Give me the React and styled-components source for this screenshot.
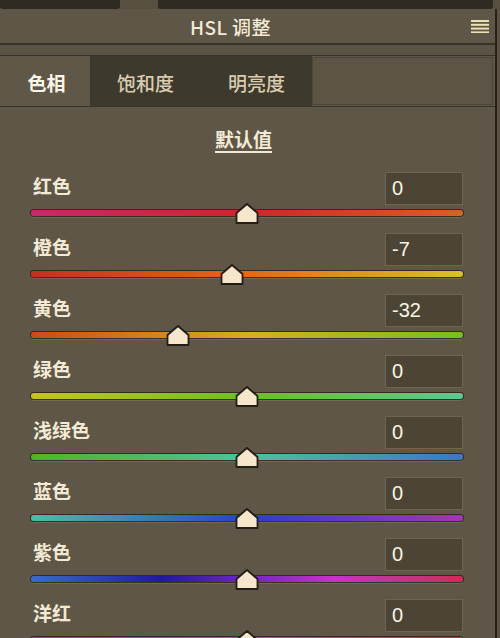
import React from 'react'
import styled, { createGlobalStyle } from 'styled-components'

const CREAM = '#f3ead6'
const PANEL = '#5e5646'
const DARK = '#3e392d'

const channels = [
  { name: '红色', value: 0, colors: ['#c42a6c', '#c8282a 50%', '#d8621c'] },
  { name: '橙色', value: -7, colors: ['#c43020', '#e06a1a 50%', '#d6c228'] },
  { name: '黄色', value: -32, colors: ['#cc4a18', '#d6b020 50%', '#76c020'] },
  { name: '绿色', value: 0, colors: ['#c6c41e', '#6cc020 50%', '#5cc894'] },
  { name: '浅绿色', value: 0, colors: ['#54b41e', '#50c0a0 50%', '#3c78c0'] },
  { name: '蓝色', value: 0, colors: ['#48c0a4', '#2a40c8 50%', '#a434b8'] },
  { name: '紫色', value: 0, colors: ['#3a6cc8', '#2018a8 30%', '#c038c0 70%', '#d02c58'] },
  { name: '洋红', value: 0, colors: ['#9c34c0', '#d040a0 50%', '#d02a3a'] },
]

function MenuIcon() {
  return (
    <svg width="18" height="14" viewBox="0 0 18 14">
      {[1, 4.8, 8.6, 12.4].map((y) => (
        <rect key={y} x="0" y={y} width="18" height="2" fill="#ebdfb4" />
      ))}
    </svg>
  )
}

function Thumb() {
  return (
    <svg width="24" height="21" viewBox="0 0 24 21">
      <path
        d="M12 1 L22.5 10 L22.5 20 L1.5 20 L1.5 10 Z"
        fill="#f6e6cc"
        stroke="#241d15"
        strokeWidth="1.8"
        strokeLinejoin="round"
      />
    </svg>
  )
}

function SliderRow({ name, value, colors }) {
  // -100..100 mapped onto the track
  const left = ((value + 100) / 200) * 100
  return (
    <Row>
      <TopLine>
        <Label>{name}</Label>
        <ValueBox>{value}</ValueBox>
      </TopLine>
      <TrackWrap>
        <Track $colors={colors} />
        <ThumbHolder style={{ left: `${left}%` }}>
          <Thumb />
        </ThumbHolder>
      </TrackWrap>
    </Row>
  )
}

export default function App() {
  return (
    <>
      <GlobalStyle />
      <Frame>
        <TopStrip>
          <DarkBlock $w={120} />
          <Gap />
          <DarkBlock $w={335} />
        </TopStrip>
        <Panel>
          <Header>
            <Title>HSL 调整</Title>
            <MenuIcon />
          </Header>
          <Rule />
          <Band />
          <Rule $thin />
          <Tabs>
            <Tab $active>色相</Tab>
            <TabGroup>
              <Tab>饱和度</Tab>
              <Tab>明亮度</Tab>
            </TabGroup>
            <TabFiller />
          </Tabs>
          <Rule $thin />
          <Defaults>
            <DefaultLink>默认值</DefaultLink>
          </Defaults>
          {channels.map((c) => (
            <SliderRow key={c.name} {...c} />
          ))}
        </Panel>
      </Frame>
    </>
  )
}

//styling:
const GlobalStyle = createGlobalStyle`
  body {
    margin: 0;
    background: ${PANEL};
    font-family: "Noto Sans CJK SC", "Noto Sans", sans-serif;
  }
`

const Frame = styled.div`
  width: 500px;
  height: 638px;
  overflow: hidden;
  background: #5a5343;
`

const TopStrip = styled.div`
  display: flex;
  height: 9px;
  background: #575040;
`

const DarkBlock = styled.div`
  width: ${(p) => p.$w}px;
  background: #2f2b22;
  border-radius: 0 0 3px 3px;
`

const Gap = styled.div`
  width: 38px;
`

const Panel = styled.div`
  width: 495px;
  background: ${PANEL};
  border-right: 2px solid #262119;
  min-height: 629px;
`

const Header = styled.div`
  display: flex;
  align-items: center;
  justify-content: space-between;
  height: 34px;
  padding: 0 6px 0 190px;
`

const Title = styled.div`
  color: ${CREAM};
  font-size: 19px;
  font-weight: 500;
  letter-spacing: 0.4px;
`

const Rule = styled.div`
  height: ${(p) => (p.$thin ? 1 : 2)}px;
  background: #37322a;
`

const Band = styled.div`
  height: 10px;
  background: #5b5444;
`

const Tabs = styled.div`
  display: flex;
  height: 50px;
  padding-left: 3px;
`

const TabGroup = styled.div`
  display: flex;
  width: 222px;
  background: ${DARK};
`

const Tab = styled.div`
  display: flex;
  align-items: center;
  justify-content: center;
  width: ${(p) => (p.$active ? 87 : 112)}px;
  color: ${(p) => (p.$active ? '#fbf5e8' : '#d9ccb0')};
  font-size: 19px;
  font-weight: ${(p) => (p.$active ? 700 : 500)};
  background: ${(p) => (p.$active ? '#5f5747' : 'transparent')};
  padding-top: 2px;
`

const TabFiller = styled.div`
  flex: 1;
  margin: 1px 2px 1px 0;
  border: 1px solid #4d4739;
  background: #5c5545;
`

const Defaults = styled.div`
  display: flex;
  justify-content: center;
  padding: 20px 8px 17px 0;
`

const DefaultLink = styled.span`
  color: ${CREAM};
  font-size: 19px;
  font-weight: 700;
  line-height: 24px;
  text-decoration: underline;
  text-underline-offset: 4px;
  text-decoration-thickness: 1.5px;
`

const Row = styled.div`
  height: 61px;
  padding: 0 32px 0 31px;
`

const TopLine = styled.div`
  display: flex;
  align-items: center;
  justify-content: space-between;
  height: 37px;
`

const Label = styled.span`
  color: ${CREAM};
  font-size: 19px;
  font-weight: 600;
  padding-left: 2px;
  margin-top: -2px;
`

const ValueBox = styled.div`
  box-sizing: border-box;
  width: 78px;
  height: 33px;
  margin-top: 4px;
  padding: 0 6px;
  display: flex;
  align-items: center;
  background: #4c4536;
  border: 1px solid #6d6551;
  color: #fbf4e4;
  font-size: 20px;
  font-family: "Liberation Sans", "Noto Sans", sans-serif;
`

const TrackWrap = styled.div`
  position: relative;
  height: 24px;
`

const Track = styled.div`
  position: relative;
  top: 5px;
  height: 6px;
  border-radius: 3px;
  background: linear-gradient(90deg, ${(p) => p.$colors.join(', ')});
  box-shadow: 0 0 0 1px rgba(38, 30, 20, 0.75), 0 2px 0 rgba(150, 140, 110, 0.35);
`

const ThumbHolder = styled.div`
  position: absolute;
  top: -2px;
  width: 24px;
  height: 21px;
  margin-left: -12px;
  display: flex;
`
